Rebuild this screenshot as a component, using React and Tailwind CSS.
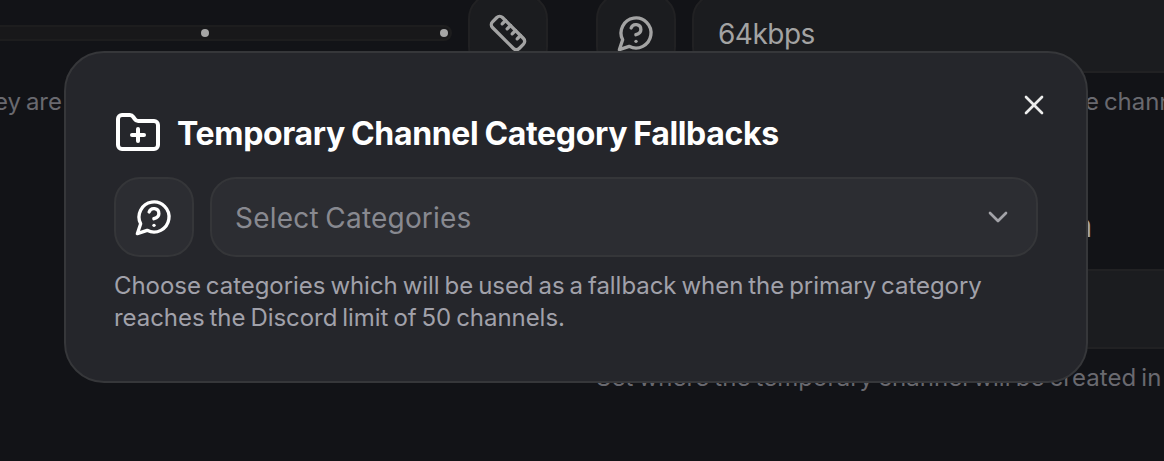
import { ChevronDown, FolderPlus, Ruler, X } from "lucide-react";

function HelpIcon({ className }) {
  return (
    <svg
      viewBox="0 0 24 24"
      fill="none"
      stroke="currentColor"
      strokeWidth="2"
      strokeLinecap="round"
      strokeLinejoin="round"
      className={className}
    >
      <path d="M7.9 20A9 9 0 1 0 4 16.1L2 22Z" />
      <path d="M9.09 9a3 3 0 0 1 5.83 1c0 2-3 3-3 3" />
      <path d="M12 17h.01" />
    </svg>
  );
}

function DimButton({ children }) {
  return (
    <div className="flex size-20 shrink-0 items-center justify-center rounded-[26px] border-2 border-[#212123] bg-[#1b1c1f] text-[#a3a3a3]">
      {children}
    </div>
  );
}

function SettingsPage() {
  return (
    <div className="flex h-full w-[1260px] gap-12 whitespace-nowrap text-2xl leading-8 text-[#69696f]">
      <section className="-mt-[7px] flex w-[548px] shrink-0 flex-col">
        <div className="flex items-center gap-4">
          <div className="-ml-4 flex h-4 flex-1 items-center justify-end rounded-full border-2 border-[#1d1d1e] bg-[#18181a] pr-0.5">
            <span className="mr-[231px] size-2 rounded-full bg-[#a6a6a6]" />
            <span className="size-2 rounded-full bg-[#a6a6a6]" />
          </div>
          <DimButton>
            <Ruler className="size-10" />
          </DimButton>
        </div>
        <p className="mt-[13px] -ml-[6px] tracking-[-0.05px] [word-spacing:-1.7px]">ey are</p>
      </section>

      <section className="-mt-[7px] flex flex-1 flex-col">
        <div className="flex gap-4">
          <DimButton>
            <HelpIcon className="size-10" />
          </DimButton>
          <div className="flex h-20 flex-1 items-center rounded-[26px] border-2 border-[#212123] bg-[#1b1c1f] px-6 pt-0.5 text-[28px] tracking-[-0.5px] text-[#a3a3a3]">
            64kbps
          </div>
        </div>
        <p className="mt-[13px] pl-[489px] tracking-[-0.05px] [word-spacing:-1.7px]">e channel.</p>
        <h2 className="mt-[92px] w-[496px] text-right text-[32px] leading-8 font-semibold text-[#a3a3a3]">
          Creation
        </h2>
        <div className="mt-[27px] h-20 shrink-0 rounded-[26px] border-2 border-[#212123] bg-[#1b1c1f]" />
        <p className="mt-[13px] tracking-[0.05px] [word-spacing:-1.7px]">
          Set where the temporary channel will be created in
        </p>
      </section>
    </div>
  );
}

function FallbackDialog() {
  return (
    <div
      role="dialog"
      className="absolute top-[51px] left-16 flex h-[332px] w-[1024px] flex-col rounded-[40px] border-2 border-[#36373a] bg-[#25262b] px-12 pt-14"
    >
      <button className="absolute top-9 right-9 text-[#ececec]">
        <X className="size-8" />
      </button>
      <div className="flex h-12 items-center gap-4 text-white">
        <FolderPlus className="size-12" />
        <h1 className="-ml-px pt-0.5 text-[32px] leading-[44px] font-bold tracking-[-0.33px] whitespace-nowrap [word-spacing:-1.2px]">
          Temporary Channel Category Fallbacks
        </h1>
      </div>
      <div className="mt-5 flex gap-4">
        <button className="flex size-20 shrink-0 items-center justify-center rounded-[26px] border-2 border-[#353639] bg-[#2c2d32] text-white">
          <HelpIcon className="size-10" />
        </button>
        <button className="flex h-20 flex-1 items-center justify-between rounded-[26px] border-2 border-[#353639] bg-[#2c2d32] pr-[22px] pl-[23px] text-[28px] text-[#888990]">
          <span className="pt-0.5 tracking-[0.2px] [word-spacing:-1.5px]">Select Categories</span>
          <ChevronDown className="size-8 text-[#a3a3a8]" />
        </button>
      </div>
      <p className="mt-[13px] text-2xl leading-8 tracking-[-0.05px] whitespace-nowrap text-[#a1a1aa] [word-spacing:-1.7px]">
        Choose categories which will be used as a fallback when the primary category
        <br />
        reaches the Discord limit of 50 channels.
      </p>
    </div>
  );
}

export default function App() {
  return (
    <main className="relative h-[461px] w-[1164px] overflow-hidden bg-[#121317] font-['Inter',sans-serif]">
      <SettingsPage />
      <FallbackDialog />
    </main>
  );
}
